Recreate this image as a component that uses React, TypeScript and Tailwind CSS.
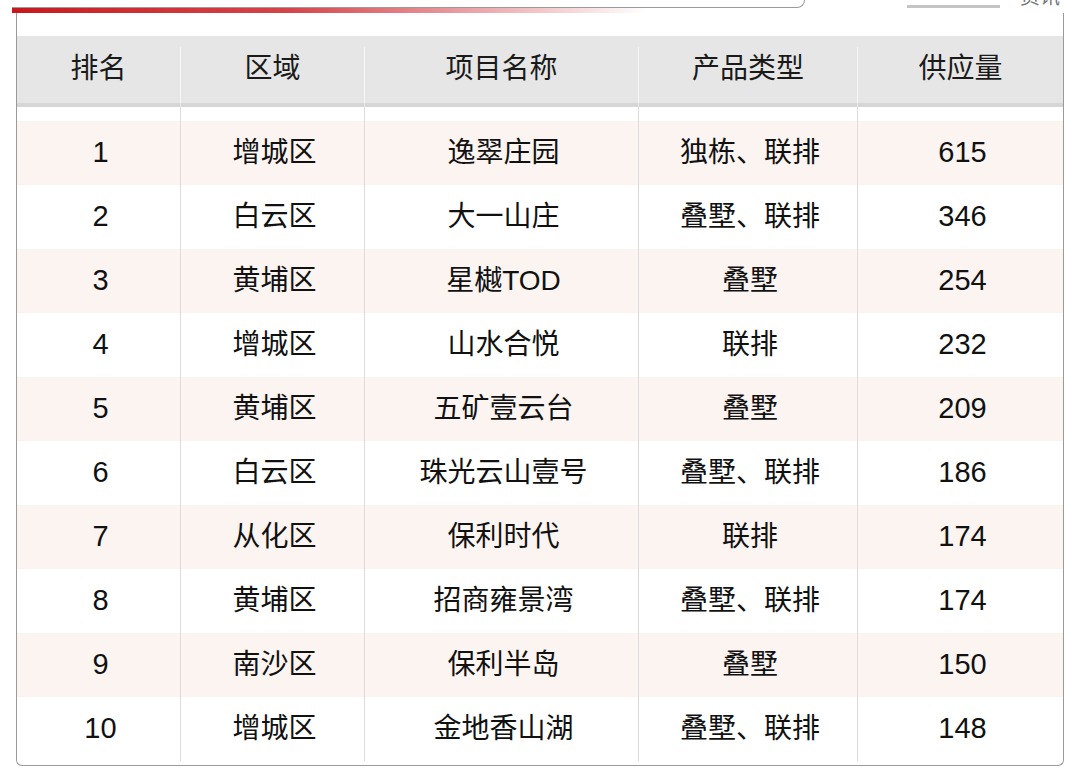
const rows = [
  ['1', '增城区', '逸翠庄园', '独栋、联排', '615'],
  ['2', '白云区', '大一山庄', '叠墅、联排', '346'],
  ['3', '黄埔区', '星樾TOD', '叠墅', '254'],
  ['4', '增城区', '山水合悦', '联排', '232'],
  ['5', '黄埔区', '五矿壹云台', '叠墅', '209'],
  ['6', '白云区', '珠光云山壹号', '叠墅、联排', '186'],
  ['7', '从化区', '保利时代', '联排', '174'],
  ['8', '黄埔区', '招商雍景湾', '叠墅、联排', '174'],
  ['9', '南沙区', '保利半岛', '叠墅', '150'],
  ['10', '增城区', '金地香山湖', '叠墅、联排', '148'],
]

const headers = ['排名', '区域', '项目名称', '产品类型', '供应量']

const cols = 'grid grid-cols-[163px_184px_274px_219px_206px]'

export default function App() {
  return (
    <div
      className="relative h-[784px] w-[1080px] overflow-hidden bg-white text-[#111]"
      style={{ fontFamily: '"Liberation Sans", "Noto Sans CJK SC", sans-serif' }}
    >
      {/* cropped top decoration */}
      <div className="flex h-[13px] items-start">
        <div className="relative ml-[12px] w-[793px]">
          <div className="h-[8px] rounded-br-[24px] border-r border-b border-[#9a9a9a]" />
          <div className="h-[5px] bg-gradient-to-r from-[#c8161d] via-[#d6434a] via-35% to-transparent to-80%" />
        </div>
        <div className="ml-[102px] mt-[5px] h-[3px] w-[93px] bg-[#c4c4c4]" />
        <span className="absolute left-[1020px] top-[-13px] text-[20px] leading-[20px] text-[#777]">资讯</span>
      </div>

      <div className="mx-[16px] h-[753px] rounded-b-[6px] border-x border-b border-[#9a9a9a] pb-[4px]">
        <div className="h-[23px]" />
        <div className={`${cols} h-[67px] bg-[#e6e6e6]`}>
          {headers.map((h, i) => (
            <div key={h} className="flex flex-col">
              <div className={`mt-[11px] flex flex-1 items-center justify-center pb-[12px] text-[28px] text-[#1a1a1a] ${i > 0 ? 'border-l border-[#f6f6f6]' : ''}`}>
                {h}
              </div>
            </div>
          ))}
        </div>
        <div className={`${cols} h-[4px] bg-[#d6d6d6]`}>
          {headers.map((h, i) => (
            <div key={h} className={i > 0 ? 'border-l border-[#e8e8e8]' : ''} />
          ))}
        </div>
        <div className={`${cols} h-[14px]`}>
          {headers.map((h, i) => (
            <div key={h} className={i > 0 ? 'border-l border-[#dcdcdc]' : ''} />
          ))}
        </div>
        {rows.map((r, idx) => (
          <div key={idx} className={`${cols} h-16 ${idx % 2 === 0 ? 'bg-[#fcf4f1]' : 'bg-white'}`}>
            {r.map((c, i) => (
              <div
                key={i}
                className={`flex items-center justify-center pl-[4px] ${i === 0 || i === 4 ? 'text-[29px]' : 'text-[28px]'} ${i > 0 ? 'border-l border-[#dcdcdc]' : ''}`}
              >
                {c}
              </div>
            ))}
          </div>
        ))}
      </div>
    </div>
  )
}
